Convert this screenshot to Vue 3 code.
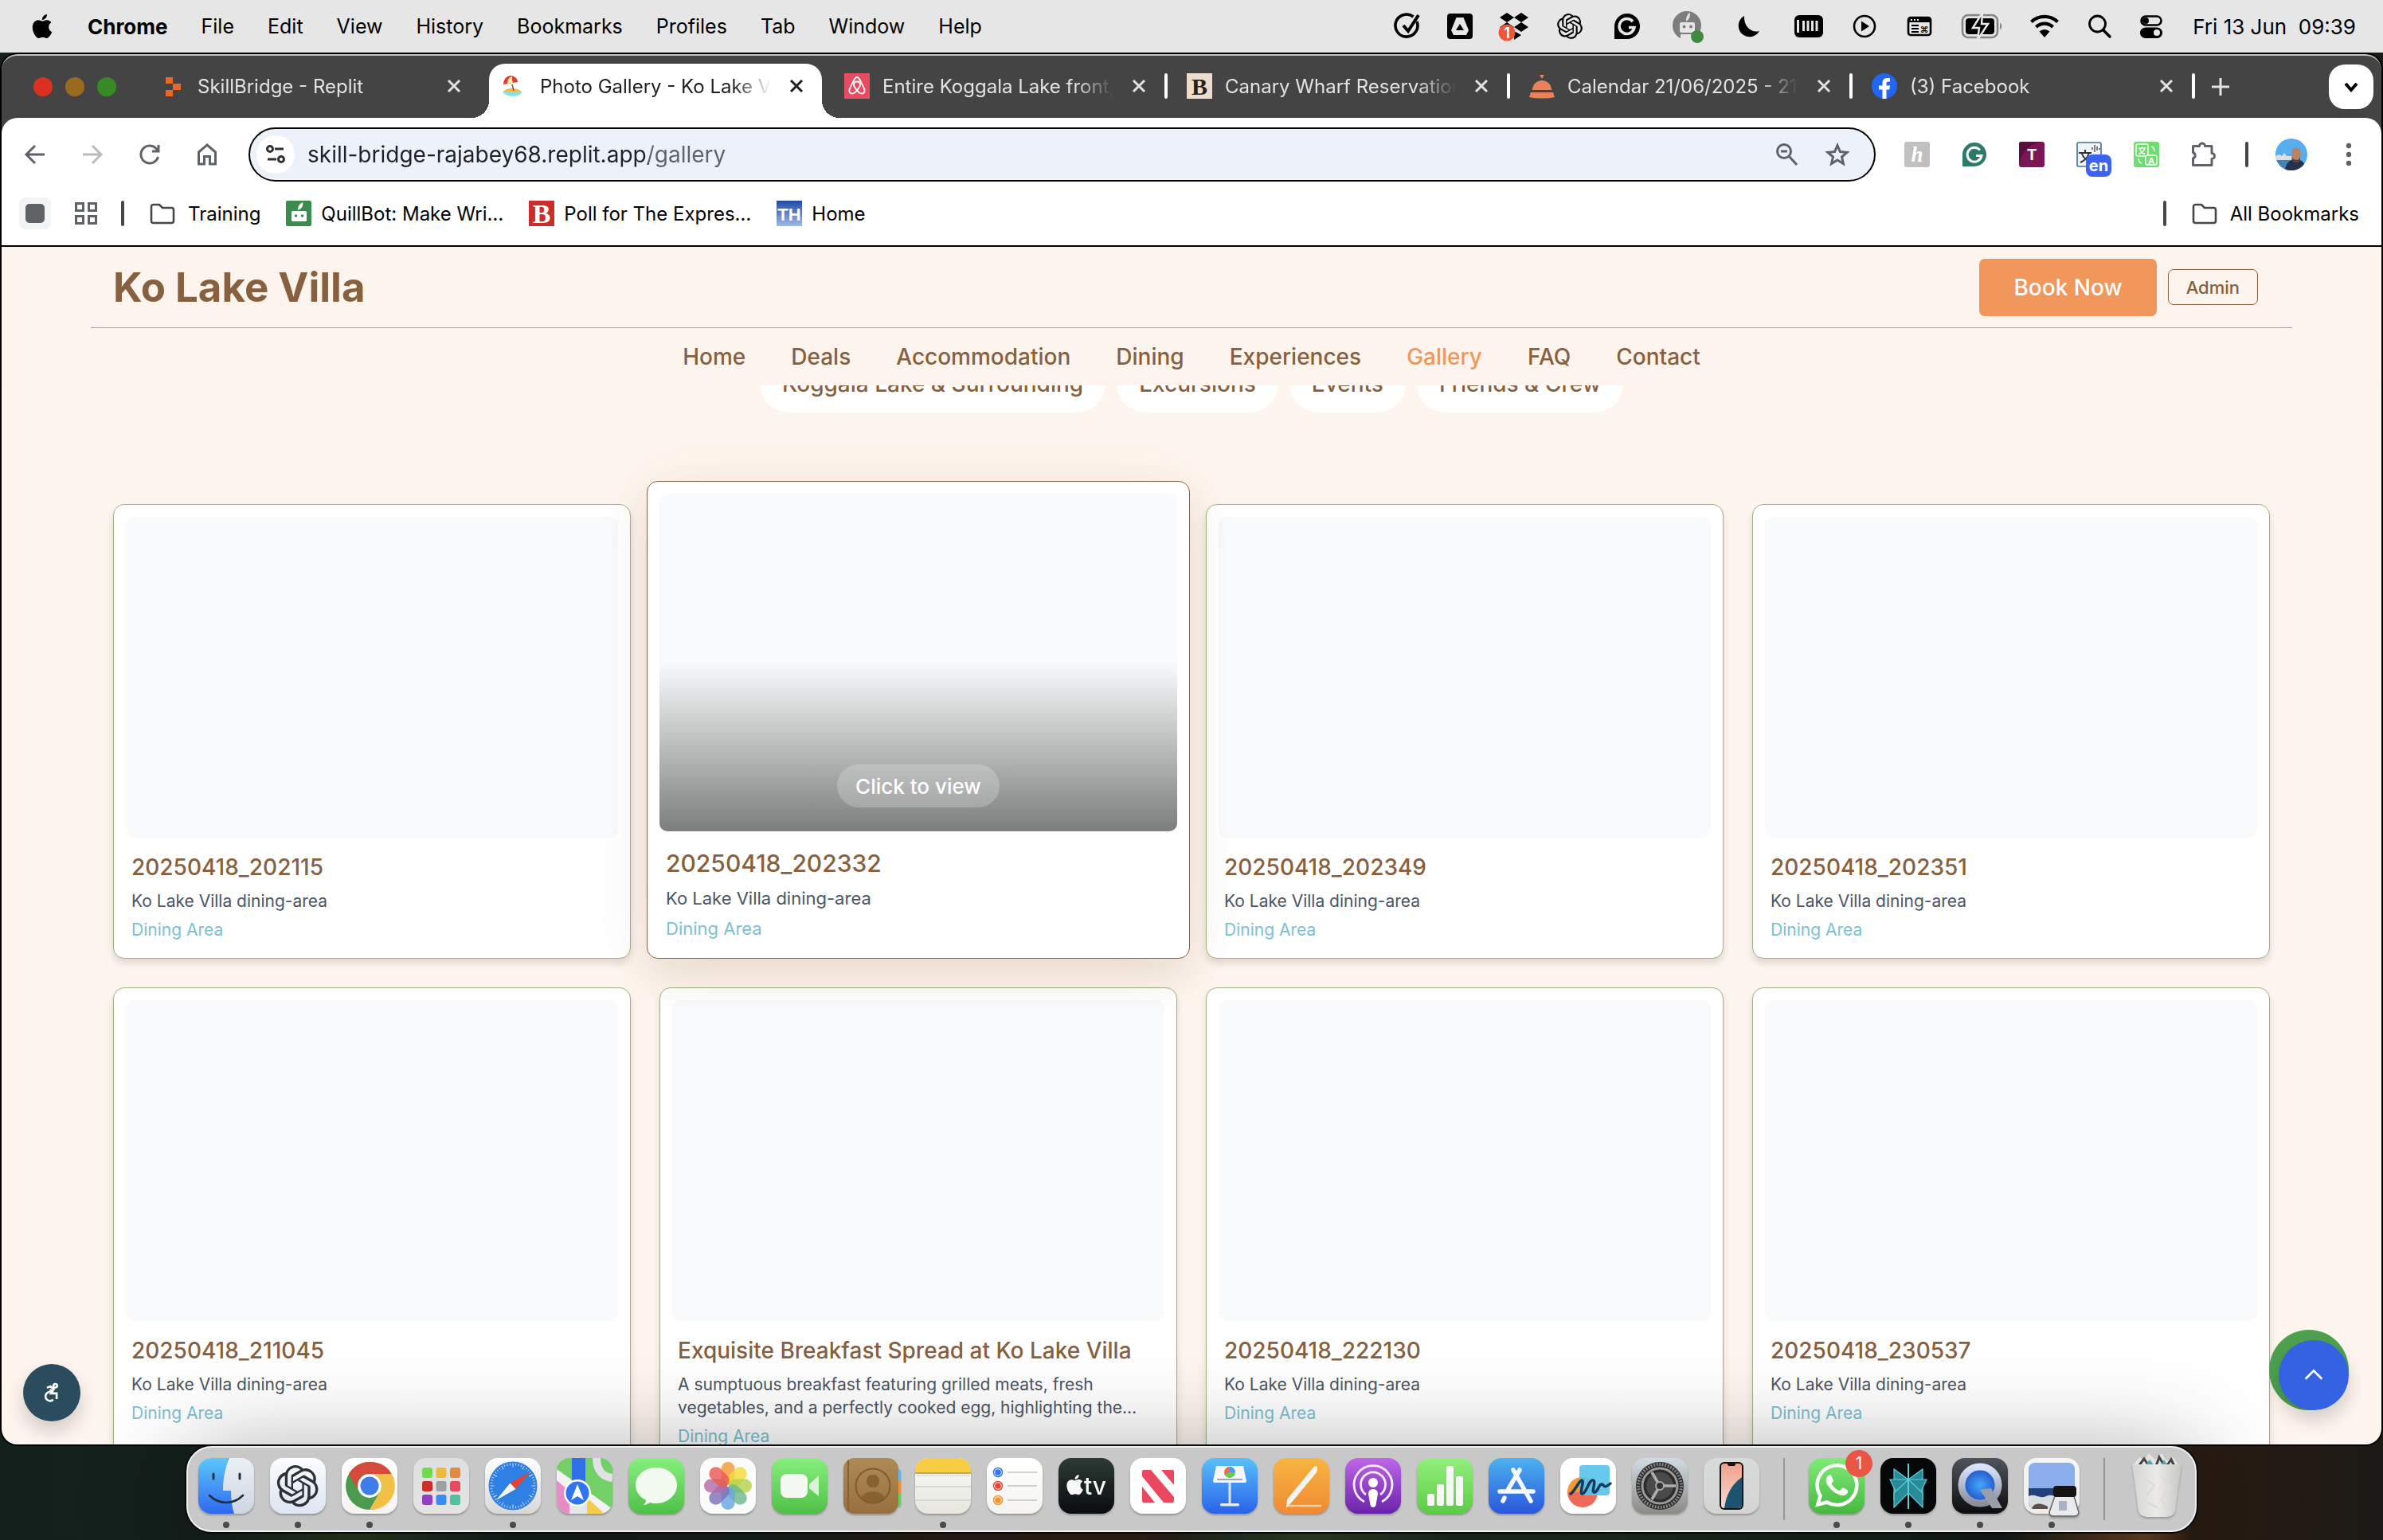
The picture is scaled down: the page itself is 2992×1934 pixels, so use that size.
<script setup>
import { ref } from 'vue'

const apple =
  'M12.152 6.896c-.948 0-2.415-1.078-3.96-1.04-2.04.027-3.91 1.183-4.961 3.014-2.117 3.675-.546 9.103 1.519 12.09 1.013 1.454 2.208 3.09 3.792 3.039 1.52-.065 2.09-.987 3.935-.987 1.831 0 2.35.987 3.96.948 1.637-.026 2.676-1.48 3.676-2.948 1.156-1.688 1.636-3.325 1.662-3.415-.039-.013-3.182-1.221-3.22-4.857-.026-3.04 2.48-4.494 2.597-4.559-1.429-2.09-3.623-2.324-4.39-2.376-2-.156-3.675 1.09-4.61 1.09zM15.53 3.83c.843-1.012 1.4-2.427 1.245-3.83-1.207.052-2.662.805-3.532 1.818-.78.896-1.454 2.338-1.273 3.714 1.338.104 2.715-.688 3.559-1.701'
const openai =
  'M22.2819 9.8211a5.9847 5.9847 0 0 0-.5157-4.9108 6.0462 6.0462 0 0 0-6.5098-2.9A6.0651 6.0651 0 0 0 4.9807 4.1818a5.9847 5.9847 0 0 0-3.9977 2.9 6.0462 6.0462 0 0 0 .7427 7.0966 5.98 5.98 0 0 0 .511 4.9107 6.051 6.051 0 0 0 6.5146 2.9001A5.9847 5.9847 0 0 0 13.2599 24a6.0557 6.0557 0 0 0 5.7718-4.2058 5.9894 5.9894 0 0 0 3.9977-2.9001 6.0557 6.0557 0 0 0-.7475-7.0729zm-9.022 12.6081a4.4755 4.4755 0 0 1-2.8764-1.0408l.1419-.0804 4.7783-2.7582a.7948.7948 0 0 0 .3927-.6813v-6.7369l2.02 1.1686a.071.071 0 0 1 .038.052v5.5826a4.504 4.504 0 0 1-4.4945 4.4944zm-9.6607-4.1254a4.4708 4.4708 0 0 1-.5346-3.0137l.142.0852 4.783 2.7582a.7712.7712 0 0 0 .7806 0l5.8428-3.3685v2.3324a.0804.0804 0 0 1-.0332.0615L9.74 19.9502a4.4992 4.4992 0 0 1-6.1408-1.6464zM2.3408 7.8956a4.485 4.485 0 0 1 2.3655-1.9728V11.6a.7664.7664 0 0 0 .3879.6765l5.8144 3.3543-2.0201 1.1685a.0757.0757 0 0 1-.071 0l-4.8303-2.7865A4.504 4.504 0 0 1 2.3408 7.872zm16.5963 3.8558L13.1038 8.364 15.1192 7.2a.0757.0757 0 0 1 .071 0l4.8303 2.7913a4.4944 4.4944 0 0 1-.6765 8.1042v-5.6772a.79.79 0 0 0-.407-.667zm2.0107-3.0231l-.142-.0852-4.7735-2.7818a.7759.7759 0 0 0-.7854 0L9.409 9.2297V6.8974a.0662.0662 0 0 1 .0284-.0615l4.8303-2.7866a4.4992 4.4992 0 0 1 6.6802 4.66zM8.3065 12.863l-2.02-1.1638a.0804.0804 0 0 1-.038-.0567V6.0742a4.4992 4.4992 0 0 1 7.3757-3.4537l-.142.0805L8.704 5.459a.7948.7948 0 0 0-.3927.6813zm1.0976-2.3654l2.602-1.4998 2.6069 1.4998v2.9994l-2.5974 1.4997-2.6067-1.4997Z'
const whatsapp =
  'M17.472 14.382c-.297-.149-1.758-.867-2.03-.967-.273-.099-.471-.148-.67.15-.197.297-.767.966-.94 1.164-.173.199-.347.223-.644.075-.297-.15-1.255-.463-2.39-1.475-.883-.788-1.48-1.761-1.653-2.059-.173-.297-.018-.458.13-.606.134-.133.298-.347.446-.52.149-.174.198-.298.298-.497.099-.198.05-.371-.025-.52-.075-.149-.669-1.612-.916-2.207-.242-.579-.487-.5-.669-.51-.173-.008-.371-.01-.57-.01-.198 0-.52.074-.792.372-.272.297-1.04 1.016-1.04 2.479 0 1.462 1.065 2.875 1.213 3.074.149.198 2.096 3.2 5.077 4.487.709.306 1.262.489 1.694.625.712.227 1.36.195 1.871.118.571-.085 1.758-.719 2.006-1.413.248-.694.248-1.289.173-1.413-.074-.124-.272-.198-.57-.347m-5.421 7.403h-.004a9.87 9.87 0 01-5.031-1.378l-.361-.214-3.741.982.998-3.648-.235-.374a9.86 9.86 0 01-1.51-5.26c.001-5.45 4.436-9.884 9.888-9.884 2.64 0 5.122 1.03 6.988 2.898a9.825 9.825 0 012.893 6.994c-.003 5.45-4.437 9.884-9.885 9.884m8.413-18.297A11.815 11.815 0 0012.05 0C5.495 0 .16 5.335.157 11.892c0 2.096.547 4.142 1.588 5.945L.057 24l6.305-1.654a11.882 11.882 0 005.683 1.448h.005c6.554 0 11.89-5.335 11.893-11.893a11.821 11.821 0 00-3.48-8.413z'

const menus = ['File', 'Edit', 'View', 'History', 'Bookmarks', 'Profiles', 'Tab', 'Window', 'Help']

// Menu bar extras, each drawn on a 40 x 40 grid; w is the slot width in the bar
const extras = [
  { name: 'Tasks', w: 32, art: '<path d="M30.500 13A14 14 0 1 1 26 7" transform="translate(-.5 1)" fill="none" stroke="#000" stroke-width="3.600"/><path d="M13 19l6 7L32 6" fill="none" stroke="#000" stroke-width="4"/>' },
  { name: 'Drive', w: 32, art: '<rect x="4" y="4" width="32" height="32" rx="4"/><path d="M15.500 9h9L31 25l-3 6H12l-3-6z" fill="#e6e6e6"/><path d="M20 17l5 8H15z"/>' },
  { name: 'Dropbox', w: 40, art: '<path d="M11 3l9 6-9 6-9-6zM29 3l9 6-9 6-9-6zM29 15l9 6-9 6-9-6zM11 15l9 6-9 6-9-6zM20 26l9 5-9 6z"/><circle cx="11" cy="28" r="10.500" fill="#ef5537"/><text x="11" y="35" font-size="19" font-weight="600" text-anchor="middle" fill="#fff">1</text>' },
  { name: 'ChatGPT', w: 36, art: `<path transform="translate(4 4) scale(1.330)" d="${openai}"/>` },
  { name: 'Grammarly', w: 44, art: '<path d="M4 36V20A16 16 0 1 1 20 36z"/><path d="M27 14a9.500 9.500 0 1 0 2 7.500h-7" fill="none" stroke="#e6e6e6" stroke-width="3.600"/>' },
  { name: 'QuillBot', w: 44, art: '<circle cx="19" cy="19" r="18" fill="#7d7d7d"/><rect x="10" y="15" width="19" height="13" rx="2" fill="#e6e6e6"/><path d="M18 14c0-5 1-9 5-11 0 5-1 8-5 11z" fill="#e6e6e6"/><circle cx="15.500" cy="20.500" r="2" fill="#7d7d7d"/><circle cx="24" cy="20.500" r="2" fill="#7d7d7d"/><path d="M11 30h16v7H11z" fill="#e6e6e6"/><rect x="24" y="25" width="16" height="16" rx="8" fill="#3f8a3f"/>' },
  { name: 'Focus', w: 44, art: '<path d="M15 7a14 14 0 1 0 19 19C24 29 14 20 15 7z"/>' },
  { name: 'Battery pack', w: 44, art: '<rect x="2" y="6" width="36" height="28" rx="6"/><path d="M6.500 12v16M13.500 13v13M19 13v13M24.500 13v13M30 13v13" stroke="#e6e6e6" stroke-width="3"/>' },
  { name: 'Now playing', w: 32, art: '<circle cx="20" cy="20" r="13" fill="none" stroke="#000" stroke-width="2.600"/><path d="M16 13.500v13l10-6.500z"/>' },
  { name: 'Keyboard viewer', w: 42, art: '<rect x="6" y="9" width="28" height="22" rx="3" fill="none" stroke="#000" stroke-width="2.600"/><path d="M6 9h28v6H6z"/><path d="M9 12h2M13 12h2M17 12h2" stroke="#e6e6e6" stroke-width="2"/><path d="M10 19h9M10 23h9M10 27h9" stroke="#000" stroke-width="2"/><text x="26" y="28" font-size="11" font-weight="700" text-anchor="middle">⌘</text>' },
  { name: 'Battery', w: 48, art: '<rect x="-3" y="6" width="44" height="28" rx="7" fill="none" stroke="#858585" stroke-width="2.600"/><rect x="1" y="10" width="36" height="20" rx="4"/><path d="M44 16c3 1 3 7 0 8z" fill="#858585"/><path d="M22 3L10 22h8l-2 15L29 17h-8z" stroke="#e6e6e6" stroke-width="2.500"/>' },
  { name: 'Wi-Fi', w: 48, art: '<path d="M3.500 14.500a24 24 0 0 1 33 0" fill="none" stroke="#000" stroke-width="4.200"/><path d="M9.500 21a15 15 0 0 1 21 0" fill="none" stroke="#000" stroke-width="4.200"/><path d="M20 34l-6.500-7.500a9.500 9.500 0 0 1 13 0z"/>' },
  { name: 'Search', w: 26, art: '<circle cx="17.500" cy="17" r="10" fill="none" stroke="#000" stroke-width="2.800"/><path d="M25 25l8 8" stroke="#000" stroke-width="3.400" stroke-linecap="round"/>' },
  { name: 'Control Centre', w: 40, art: '<rect x="7.500" y="7.500" width="25" height="11" rx="5.500" fill="none" stroke="#000" stroke-width="2.600"/><circle cx="13" cy="13" r="4"/><rect x="6" y="21.500" width="28" height="13.500" rx="6.700"/><circle cx="27" cy="28" r="4" fill="#e6e6e6"/>' },
]

// Favicons are drawn on a 32 x 32 grid
const tabs = [
  { title: 'SkillBridge - Replit', line: false, art: '<path d="M8 5h9v8H8zM17 13h10v8H17zM8 21h9v8H8z" fill="#e8682c"/>' },
  { title: 'Photo Gallery - Ko Lake V', active: true, art: '<path d="M1 24a13 8 0 0 1 24 0z" fill="#f5b945"/><path d="M1 23h25a13 8 0 0 1-25 0z" fill="#7ee3ea"/><path d="M13 14l2 8" stroke="#8a5a2b" stroke-width="1.500"/><path d="M2 14C2 6 9 1 15 4c4 2 5 5 5 7z" fill="#e23b2e"/><path d="M7 13c0-5 2-8 6-9 0 3 0 6 1 8z" fill="#ffe9a8"/>' },
  { title: 'Entire Koggala Lake front,', line: true, art: '<rect width="32" height="32" fill="#e64b60"/><path d="M16 21.500c-2.500-3-4-5-4-7a4 4 0 0 1 8 0c0 2-1.500 4-4 7zm0 0c-2 2.500-4 4-6 4-2.500 0-4-2-3.500-4.500C7 18.500 13 7 14 6a2.500 2.500 0 0 1 4 0c1 1 7 12.500 7.500 15 .5 2.500-1 4.500-3.500 4.500-2 0-4-1.500-6-4z" fill="none" stroke="#fff" stroke-width="1.800"/>' },
  { title: 'Canary Wharf Reservation', line: true, art: '<rect width="32" height="32" fill="#eddccb"/><text x="16" y="27" font-size="30" font-weight="700" text-anchor="middle" font-family="Liberation Serif, serif" fill="#222">B</text>' },
  { title: 'Calendar 21/06/2025 - 21', line: true, art: '<path d="M13 2h6l-3 5zM4 21a12 12 0 0 1 24 0zM2 24h28l2 6c-9 2-23 2-32 0z" fill="#e8825c"/>' },
  { title: '(3) Facebook', line: true, art: '<circle cx="16" cy="16" r="16" fill="#2166f5"/><path d="M13.500 32V20.500h-4.500V15.500h4.500v-3c0-4.500 2.500-6.500 6-6.500 1.500 0 2.500.2 3.500.4v4.200h-2.200c-1.800 0-2.300.9-2.300 2.400v2.500H23l-.8 5h-3.700V32z" fill="#fff"/>' },
]

const address = ref('skill-bridge-rajabey68.replit.app/gallery')

const folder = '<path d="M2 7.500A2.500 2.500 0 0 1 4.500 5H12l4 4h11.500A2.500 2.500 0 0 1 30 11.500v14a2.500 2.500 0 0 1-2.500 2.500h-23A2.500 2.500 0 0 1 2 25.500z" fill="none" stroke="#474747" stroke-width="2.600"/>'
const bookmarks = [
  { title: 'Training', folder: true, art: folder },
  { title: 'QuillBot: Make Wri…', art: '<rect width="32" height="32" rx="2" fill="#3c8c50"/><rect x="7" y="13" width="19" height="13" rx="1.500" fill="#fff"/><circle cx="12.500" cy="19" r="1.800" fill="#3c8c50"/><circle cx="20.500" cy="19" r="1.800" fill="#3c8c50"/><path d="M15 12c0-5 2-8 6-10 1 4-1 8-4.500 9z" fill="#fff"/>' },
  { title: 'Poll for The Expres…', art: '<rect width="32" height="32" fill="#cc2d28"/><text x="16" y="28" font-size="34" font-weight="700" text-anchor="middle" font-family="Liberation Serif, serif" fill="#fff">B</text>' },
  { title: 'Home', art: '<defs><linearGradient id="th" x2="0" y2="1"><stop offset="0" stop-color="#1f4aa8"/><stop offset="1" stop-color="#9dbae8"/></linearGradient></defs><rect width="32" height="32" fill="url(#th)"/><text x="16" y="25" font-size="22" text-anchor="middle" font-family="Liberation Sans, sans-serif" font-weight="700" fill="#fff">TH</text>' },
]

const extensions = [
  { name: 'Honey', art: '<rect width="32" height="32" rx="3" fill="#c0c0c0"/><text x="16" y="25" font-size="27" font-style="italic" font-weight="700" text-anchor="middle" font-family="Liberation Serif, serif" fill="#fff">h</text>' },
  { name: 'Grammarly', art: '<path d="M1 31V16A15 15 0 1 1 16 31z" fill="#2c7a68"/><path d="M23 10.500a9 9 0 1 0 2 7h-7" fill="none" stroke="#fff" stroke-width="3"/>' },
  { name: 'Text helper', art: '<rect width="32" height="32" rx="3" fill="#7b1757"/><path d="M0 27C4 12 14 2 30 0H3a3 3 0 0 0-3 3z" fill="#570f3e"/><text x="16" y="23" font-size="19" font-weight="700" text-anchor="middle" fill="#fff">T</text>' },
  { name: 'Translate', badge: 'en', art: '<rect x="1" y="1" width="30" height="30" rx="2" fill="#f1f4f8" stroke="#3f7199" stroke-width="1.600"/><path d="M3 14h16M11 10v4M16 14c-2 6-6 10-11 12M7 15c2 5 5 8 9 10" fill="none" stroke="#333" stroke-width="2"/><path d="M20 7v3M23 4v9M26 6v5M29 8v2" stroke="#555" stroke-width="1.500"/>' },
  { name: 'Translator', art: '<rect width="32" height="32" rx="3" fill="#6fdc6f"/><rect x="3" y="3" width="15" height="15" rx="2" fill="none" stroke="#fff" stroke-width="1.500"/><path d="M6 8h9M10.500 6v2M14 8c-1 4-4 6-7.500 7.500M7.500 9c1 3 3 5 6.500 6.500" fill="none" stroke="#fff" stroke-width="1.500"/><rect x="15" y="17" width="14" height="12" rx="2" fill="#6fdc6f" stroke="#fff" stroke-width="1.500"/><text x="22" y="27.500" font-size="11" font-weight="700" text-anchor="middle" fill="#fff">A</text><path d="M22 6c3 1 4 3 4 6M6 21c0 3 1 5 4 6" fill="none" stroke="#fff" stroke-width="1.500"/>' },
  { name: 'Extensions', art: '<path d="M2.500 5.500h8a3.500 3.500 0 1 1 7 0h8.500v9a3.500 3.500 0 1 1 0 7v8H2.500v-8.500a4 4 0 0 0 0-7.500z" fill="none" stroke="#5f6368" stroke-width="3" stroke-linejoin="round"/>' },
]

const siteNav = ['Home', 'Deals', 'Accommodation', 'Dining', 'Experiences', 'Gallery', 'FAQ', 'Contact']
const filters = ['Koggala Lake & Surrounding', 'Excursions', 'Events', 'Friends & Crew']

const area = 'Ko Lake Villa dining-area'
const photos = [
  { title: '20250418_202115', text: area },
  { title: '20250418_202332', text: area, hovered: true },
  { title: '20250418_202349', text: area },
  { title: '20250418_202351', text: area },
  { title: '20250418_211045', text: area },
  { title: 'Exquisite Breakfast Spread at Ko Lake Villa', text: 'A sumptuous breakfast featuring grilled meats, fresh vegetables, and a perfectly cooked egg, highlighting the…' },
  { title: '20250418_222130', text: area },
  { title: '20250418_230537', text: area },
]

const grad = (id, a, b) =>
  `<defs><linearGradient id="${id}" x2="0" y2="1"><stop offset="0" stop-color="${a}"/><stop offset="1" stop-color="${b}"/></linearGradient></defs><rect width="70" height="70" rx="16" fill="url(#${id})"/>`

const petals = ['#f29a38', '#f2dc3c', '#b5d14a', '#6cb98a', '#6aa5de', '#7d72b8', '#b56aa8', '#ea5a50']
  .map((c, i) => `<rect x="26.500" y="5" width="17" height="29" rx="8.500" fill="${c}" opacity=".82" transform="rotate(${i * 45} 35 35)"/>`)
  .join('')
const launch = ['#6fdc50', '#f2b83c', '#e8883c', '#c9302a', '#9aa0a4', '#e8485c', '#9040c0', '#3c8cf0', '#50c0a0']
  .map((c, i) => `<rect x="${11 + (i % 3) * 17.5}" y="${12 + Math.floor(i / 3) * 17}" width="13" height="13" rx="3" fill="${c}"/>`)
  .join('')
const ticks = Array.from({ length: 48 }, (_, i) => `<path d="M35 6.500v${i % 4 ? 2.5 : 5}" stroke="#dcecff" stroke-width=".9" transform="rotate(${i * 7.5} 35 35)"/>`).join('')

// Dock artwork uses a 70 x 70 grid
const dockGroups = [
  [
    { name: 'Finder', on: true, art: `<defs><linearGradient id="fi" x2="0" y2="1"><stop offset="0" stop-color="#5ac8fa"/><stop offset="1" stop-color="#3068f0"/></linearGradient></defs>${grad('fb', '#eceff5', '#cdd6e2')}<path d="M16 0h23c-5 12-8 25-8 41h10c0 10 1 20 4 29H16A16 16 0 0 1 0 54V16A16 16 0 0 1 16 0z" fill="url(#fi)"/><path d="M19 20v6M52 20v6" stroke="#20303c" stroke-width="3" stroke-linecap="round"/><path d="M14 47c12 12 30 12 42 0" fill="none" stroke="#20303c" stroke-width="2.600" stroke-linecap="round"/>` },
    { name: 'ChatGPT', on: true, art: `${grad('cg', '#fbfcfe', '#dde5f2')}<path transform="translate(8.500 9) scale(2.180)" d="${openai}" fill="#2c3138"/>` },
    { name: 'Chrome', on: true, art: `${grad('ch', '#ffffff', '#f6f4f2')}<circle cx="35" cy="35" r="30" fill="#4b9a50"/><path d="M35 20h27.800A30 30 0 0 1 35 65l13-22.500A15 15 0 0 0 35 20z" fill="#f2c044"/><path d="M35 5a30 30 0 0 1 27.800 15H35a15 15 0 0 0-13 22.500L9 20A30 30 0 0 1 35 5z" fill="#d64a3c"/><circle cx="35" cy="35" r="15" fill="#fff"/><circle cx="35" cy="35" r="11.500" fill="#3f7de8"/>` },
    { name: 'Launchpad', art: `${grad('lp', '#dddfe1', '#e4e4e2')}${launch}` },
    { name: 'Safari', on: true, art: `${grad('sf', '#ffffff', '#d8d8d8')}<circle cx="35" cy="35" r="30.500" fill="#2f80e4"/>${ticks}<path d="M57 17L38.500 39l-7-7.500z" fill="#e8402f"/><path d="M14 53l17.500-21.500 7 7.500z" fill="#f6f6f6"/>` },
    { name: 'Maps', art: `<defs><clipPath id="mp"><rect width="70" height="70" rx="16"/></clipPath></defs><g clip-path="url(#mp)"><path d="M0 0h70v70H0z" fill="#72d066"/><path d="M0 14l70 50v6H0z" fill="#f3f3f5"/><path d="M0 28l16 14v28H0z" fill="#e88cc8"/><path d="M38 70V50l22 20z" fill="#f5cd48"/><path d="M36 0h34v46L36 20z" fill="#72d066"/><path d="M50 0c0 16 8 24 20 25" fill="none" stroke="#e2e2e6" stroke-width="10"/><path d="M19 0h17v70H19z" fill="#2f6fe8"/><path d="M16 50h22v20H16z" fill="#e4e6ea"/></g><circle cx="26" cy="44" r="17" fill="#fff"/><circle cx="26" cy="44" r="14.500" fill="#2f74f0"/><path d="M26 33l8 20-8-5-8 5z" fill="#fff"/>` },
    { name: 'Messages', art: `${grad('ms', '#86ef7c', '#50c048')}<path d="M35 12c15 0 26 10 26 22S50 57 35 57c-3 0-5 0-8-1-2 1-5 3-8 3 2-2 3-4 3-6C14 49 9 42 9 34c0-12 11-22 26-22z" fill="#f2faf0"/>` },
    { name: 'Photos', art: `<rect width="70" height="70" rx="16" fill="#fbfbfb"/>${petals}` },
    { name: 'FaceTime', art: `${grad('ft', '#86ef7c', '#50c048')}<rect x="11" y="20" width="34" height="30" rx="8" fill="#f4faf2"/><path d="M47 33l12-11v26L47 38z" fill="#dcf2d8"/>` },
    { name: 'Contacts', art: '<path d="M62 14h8a3 3 0 0 1 2 3v12H62z" fill="#5fb8e8"/><path d="M62 29h10v16H62z" fill="#f09038"/><path d="M62 45h10v12a3 3 0 0 1-3 3h-7z" fill="#66cc5c"/><defs><linearGradient id="ct" x2="0" y2="1"><stop offset="0" stop-color="#ae8a55"/><stop offset="1" stop-color="#98703f"/></linearGradient></defs><rect width="69" height="70" rx="14" fill="url(#ct)"/><path d="M6 3v64" stroke="#856033" stroke-width="2"/><circle cx="37" cy="35" r="21.500" fill="none" stroke="#7d5a30" stroke-width="2"/><circle cx="37" cy="29" r="8" fill="#86622f"/><path d="M22 50a16 12 0 0 1 30 0 21 21 0 0 1-30 0z" fill="#86622f"/>' },
    { name: 'Notes', on: true, art: `${grad('nt', '#fbfbf8', '#e6e5df')}<path d="M0 18V16A16 16 0 0 1 16 0h38a16 16 0 0 1 16 16v2z" fill="#f7cd46"/><path d="M0 19h70" stroke="#b5a67c" stroke-width="2"/><path d="M2 22h66" stroke="#bbb" stroke-width="1.500" stroke-dasharray="1 1.500"/><path d="M0 36h70M0 53h70" stroke="#cfcfcf" stroke-width="1.500"/>` },
    { name: 'Reminders', art: `${grad('rm', '#ffffff', '#f4f3ef')}<g stroke-width="1.500" fill="none"><circle cx="14" cy="18" r="5.500" stroke="#2f74f0"/><circle cx="14" cy="35" r="5.500" stroke="#e04838"/><circle cx="14" cy="53" r="5.500" stroke="#ee9430"/></g><circle cx="14" cy="18" r="3.800" fill="#2f74f0"/><circle cx="14" cy="35" r="3.800" fill="#e04838"/><circle cx="14" cy="53" r="3.800" fill="#ee9430"/><path d="M26 18h37M26 35h37M26 53h37" stroke="#c2c2c2" stroke-width="1.600"/>` },
    { name: 'TV', art: `${grad('tv', '#2c3a34', '#0a0c10')}<path transform="translate(8 21) scale(1.050)" d="${apple}" fill="#f8f8f8"/><text x="32" y="46" font-size="30" fill="#f8f8f8" font-weight="500">tv</text>` },
    { name: 'News', art: '<rect width="70" height="70" rx="16" fill="#fff"/><path d="M15 17a2 2 0 0 1 2-2h9l29 34v5a2 2 0 0 1-2 2H42L15 23z" fill="#ea4860"/><path d="M39 15h14a2 2 0 0 1 2 2v17z" fill="#ea4860"/><path d="M15 36l16 20H17a2 2 0 0 1-2-2z" fill="#ea4860"/>' },
    { name: 'Keynote', art: `${grad('kn', '#58c0fa', '#2a62ea')}<path d="M18 10h34l4 19a2 2 0 0 1-2 2H16a2 2 0 0 1-2-2z" fill="#f6f6f8"/><circle cx="35" cy="18" r="7" fill="#68c850"/><path d="M35 18v-7a7 7 0 0 0-6 10z" fill="#ee6a50"/><path d="M35 18v-7a7 7 0 0 1 7 7z" fill="#4a9cf0"/><path d="M19 27h32" stroke="#9aa8b8" stroke-width="2"/><path d="M35 31v27" stroke="#dfe6f0" stroke-width="3"/><rect x="23" y="57" width="24" height="3.500" rx="1.500" fill="#e6ecf4"/>` },
    { name: 'Pages', art: `${grad('pg', '#f7b540', '#ef8a34')}<path d="M57 13c2 1 1 4-1 8L21 53l-9 7 3-11 36-33c3-3 5-4 6-3z" transform="rotate(-8 35 35)" fill="#f6f4f2"/><path d="M18 60h42" stroke="#f8cfa0" stroke-width="2.500"/>` },
    { name: 'Podcasts', art: `${grad('pc', '#bf66ea', '#6a22aa')}<g fill="none" stroke="#f4ecfa" stroke-width="2.800"><path d="M24 55a24 24 0 1 1 22 0"/><path d="M26 46a15.500 15.500 0 1 1 18 0"/></g><circle cx="35" cy="31" r="6" fill="#fff"/><path d="M29 45c0-4 3-6 6-6s6 2 6 6l-2.500 14c-1 4-6 4-7 0z" fill="#fff"/>` },
    { name: 'Numbers', art: `${grad('nm', '#92f07c', '#5ccb46')}<g fill="#f4faf2"><rect x="13" y="45" width="9" height="15" rx="2"/><rect x="25" y="33" width="9" height="27" rx="2"/><rect x="37" y="10" width="9" height="50" rx="2"/><rect x="49" y="23" width="9" height="37" rx="2"/></g>` },
    { name: 'App Store', art: `${grad('as', '#4cb2f0', '#2a56da')}<g stroke="#f6f9fe" stroke-width="5.500" stroke-linecap="round"><path d="M31 15l22 39M39 15L23 42M14 42h42M20 50l-2 4"/></g>` },
    { name: 'Freeform', art: '<rect width="70" height="70" rx="16" fill="#fff"/><circle cx="28" cy="43" r="19" fill="#ee6a58"/><path d="M9 43a19 19 0 0 1 19-19v19z" fill="#f29a38"/><rect x="24" y="9" width="38" height="38" rx="4" fill="#5ac4ea" opacity=".92"/><path d="M13 45c6-4 10-16 14-17 4 0-4 18 1 17s8-18 13-17-3 16 2 15 5-10 9-10 1 7 11-1" fill="none" stroke="#123c5c" stroke-width="3.500" stroke-linecap="round"/>' },
    { name: 'System Settings', art: `${grad('ss', '#cfdce4', '#8c8a86')}<circle cx="35" cy="35" r="30" fill="#2c2c2c"/><circle cx="35" cy="35" r="27" fill="none" stroke="#8c8c8c" stroke-width="4" stroke-dasharray="1.800 1.800"/><circle cx="35" cy="35" r="22" fill="none" stroke="#9a9a9a" stroke-width="3"/><circle cx="35" cy="35" r="17" fill="#4a4a4a"/><path d="M35 35h20M35 35L25 18M35 35L25 52" stroke="#b0b0b0" stroke-width="3.500"/><circle cx="35" cy="35" r="5" fill="#333" stroke="#aaa" stroke-width="2"/>` },
    { name: 'iPhone Mirroring', art: `${grad('im', '#d8dbdb', '#d4d4d2')}<defs><linearGradient id="ip" x2="0" y2="1"><stop offset="0" stop-color="#f0a08c"/><stop offset="1" stop-color="#f6dcd4"/></linearGradient></defs><rect x="20" y="5" width="30" height="60" rx="6" fill="#111"/><rect x="22" y="7" width="26" height="56" rx="4" fill="url(#ip)"/><path d="M48 24C34 34 28 48 26 63h18a4 4 0 0 0 4-4z" fill="#1c5470"/><rect x="30" y="6" width="10" height="4" rx="2" fill="#111"/>` },
  ],
  [
    { name: 'WhatsApp', on: true, badge: '1', art: `${grad('wa', '#80ec78', '#46b840')}<path transform="translate(8 7) scale(2.280)" d="${whatsapp}" fill="#fafafa"/>` },
    { name: 'Perplexity', on: true, art: '<rect width="70" height="70" rx="16" fill="#050708"/><g stroke="#58d0dc" stroke-width="1.200" fill="#2a8a98"><path d="M35 27L17 14v38h5l13-20zM35 27l18-13v38h-5L35 32z"/><path d="M12 27h46L48 48l-13-21-13 21z"/><path d="M17 44v18l18-18 18 18V44L35 27z"/><path d="M35 7v57" stroke-width="2"/></g>' },
    { name: 'QuickTime Player', on: true, art: `${grad('qt', '#50545c', '#0c0c0e')}<defs><radialGradient id="qb"><stop offset="0" stop-color="#48a8f8"/><stop offset="1" stop-color="#1c4cc8"/></radialGradient><linearGradient id="qr" x2="0" y2="1"><stop offset="0" stop-color="#d8e4ff"/><stop offset="1" stop-color="#8a8e98"/></linearGradient></defs><circle cx="35" cy="34" r="23" fill="url(#qb)" stroke="url(#qr)" stroke-width="9"/><path d="M35 40l14-2 14 25H50z" fill="#9a9ea8"/>` },
    { name: 'Preview', on: true, art: `${grad('pv', '#f6f6f6', '#ededed')}<rect x="6" y="6" width="58" height="58" rx="8" fill="#8aaeec"/><path d="M6 38h58v18a8 8 0 0 1-8 8H14a8 8 0 0 1-8-8z" fill="#24407c"/><path d="M6 48c8-4 14 4 22 0s14 4 20 0v16H14a8 8 0 0 1-8-8z" fill="#d8dde2"/><path d="M10 64c2-8 12-8 20-3v3z" fill="#5c5048"/><path d="M39 48h24l6 20a5 5 0 0 1-5 5H36a5 5 0 0 1-4-5z" fill="#e8eaec" stroke="#666" stroke-width="1.500"/><rect x="37" y="35" width="29" height="14" rx="4" fill="#151515"/><path d="M44 54h10v12H44z" fill="#a8b4c4"/>` },
  ],
  [
    { name: 'Bin', art: '<defs><linearGradient id="bn"><stop offset="0" stop-color="#d8d8d6"/><stop offset=".5" stop-color="#f0efee"/><stop offset="1" stop-color="#c8c8c6"/></linearGradient></defs><path d="M4 10L13-1l6 4 6-9 8 8 8-8 6 9 9-3 8 10z" fill="#e4e4e4"/><path d="M13 9l6-8 6 9M34 10l4-11 6 10M48 9l5-7 4 8" fill="none" stroke="#444" stroke-width="3"/><path d="M26 2l6 8H20zM44 2l5 8h-9z" fill="#5aa0a8"/><path d="M4 8h62l-8 58c-1 6-6 8-12 8H24c-6 0-11-2-12-8z" fill="url(#bn)" opacity=".94"/><path d="M16 24l16 10-10 14M40 22l12 14-12 16 10 12M22 56l14 6" fill="none" stroke="#dcdcda" stroke-width="2.500"/>' },
  ],
]
</script>

<template>
  <div class="desktop">
    <header class="menubar">
      <nav class="menus" aria-label="Application menu">
        <button class="menu" aria-label="Apple"><svg class="apple" viewBox="0 0 24 24"><path :d="apple" /></svg></button>
        <button class="menu app">Chrome</button>
        <button v-for="m in menus" :key="m" class="menu">{{ m }}</button>
      </nav>
      <div class="extras">
        <button v-for="e in extras" :key="e.name" class="extra" :style="{ width: e.w + 'px' }" :aria-label="e.name">
          <svg viewBox="0 0 40 40" v-html="e.art"></svg>
        </button>
        <time class="clock">Fri 13 Jun&nbsp; 09:39</time>
      </div>
    </header>

    <main class="window">
      <div class="tabstrip">
        <div class="lights">
          <button class="light red" aria-label="Close window"></button>
          <button class="light amber" aria-label="Minimise window"></button>
          <button class="light green" aria-label="Zoom window"></button>
        </div>
        <div v-for="t in tabs" :key="t.title" class="tab" :class="{ active: t.active, lined: t.line }">
          <svg class="favicon" viewBox="0 0 32 32" v-html="t.art"></svg>
          <span class="tab-title">{{ t.title }}</span>
          <button class="tab-close" aria-label="Close tab">
            <svg viewBox="0 0 32 32"><path d="M9 9l14 14M23 9L9 23" /></svg>
          </button>
        </div>
        <button class="new-tab" aria-label="New tab"><svg viewBox="0 0 32 32"><path d="M16 5v22M5 16h22" /></svg></button>
        <button class="tab-search" aria-label="Search tabs"><svg viewBox="0 0 32 32"><path d="M9 12l7 8 7-8" /></svg></button>
      </div>

      <div class="toolbar">
        <div class="history">
          <button aria-label="Back"><svg viewBox="0 0 32 32"><path d="M28 16H6M16 5L5 16l11 11" /></svg></button>
          <button class="dim" aria-label="Forward"><svg viewBox="0 0 32 32"><path d="M4 16h22M16 5l11 11-11 11" /></svg></button>
          <button aria-label="Reload"><svg viewBox="0 0 32 32"><path d="M26.500 19A11 11 0 1 1 24 8.500l3 3M27 4v8h-8" /></svg></button>
          <button aria-label="Home page"><svg viewBox="0 0 32 32"><path d="M5.500 13L16 4l10.500 9v15h-7V18.500h-7V28h-7z" /></svg></button>
        </div>
        <form class="omnibox" @submit.prevent>
          <button class="site-info" type="button" aria-label="Site information">
            <svg viewBox="0 0 32 32"><path d="M15 9h11M6 22h11" /><circle cx="9" cy="9" r="3.500" /><circle cx="23" cy="22" r="3.500" /></svg>
          </button>
          <input v-model="address" class="address" type="text" aria-label="Address" spellcheck="false" />
          <button type="button" aria-label="Zoom"><svg viewBox="0 0 32 32"><circle cx="13" cy="12" r="8.500" /><path d="M19 18l10 11M9 12h8" /></svg></button>
          <button type="button" aria-label="Bookmark this page"><svg viewBox="0 0 32 32"><path d="M16 4.500l3.400 8 8.600.8-6.500 5.700 2 8.500-7.500-4.600-7.500 4.600 2-8.500L4 13.300l8.600-.8z" /></svg></button>
        </form>
        <div class="extensions">
          <button v-for="x in extensions" :key="x.name" class="extension" :aria-label="x.name">
            <svg viewBox="0 0 32 32" v-html="x.art"></svg>
            <span v-if="x.badge" class="lang">{{ x.badge }}</span>
          </button>
        </div>
        <span class="rule"></span>
        <button class="avatar" aria-label="Profile">
          <svg viewBox="0 0 40 40">
            <defs><clipPath id="face"><circle cx="20" cy="20" r="20" /></clipPath></defs>
            <g clip-path="url(#face)">
              <path d="M0 0h40v40H0z" fill="#56aef0" />
              <path d="M0 22l5-2 3 2 3-4 3 4h6v7H0z" fill="#d8e0e4" />
              <path d="M0 27h20v13H0z" fill="#3f84b8" />
              <path d="M12 40c1-9 6-14 13-14s13 4 13 14z" fill="#24304c" />
              <ellipse cx="26" cy="19" rx="6" ry="8" fill="#b88468" />
              <path d="M21 23c2 6 8 6 10 0v5c-3 3-8 3-10 0z" fill="#5c4438" />
            </g>
          </svg>
        </button>
        <button class="more" aria-label="Chrome menu"><svg viewBox="0 0 32 32"><circle cx="16" cy="5" r="3.200" /><circle cx="16" cy="16" r="3.200" /><circle cx="16" cy="27" r="3.200" /></svg></button>
      </div>

      <nav class="bookmarks" aria-label="Bookmarks">
        <button class="group" aria-label="Tab groups"><span class="swatch"></span></button>
        <button class="apps" aria-label="Apps"><svg viewBox="0 0 28 28"><path d="M1.500 1.500h9v9h-9zM17.500 1.500h9v9h-9zM1.500 17.500h9v9h-9zM17.500 17.500h9v9h-9z" /></svg></button>
        <span class="rule"></span>
        <a v-for="b in bookmarks" :key="b.title" class="bookmark" :class="{ folder: b.folder }" href="#">
          <svg viewBox="0 0 32 32" v-html="b.art"></svg>{{ b.title }}
        </a>
        <span class="rule last"></span>
        <a class="bookmark folder" href="#"><svg viewBox="0 0 32 32" v-html="folder"></svg>All Bookmarks</a>
      </nav>

      <div class="page">
        <header class="site-header">
          <div class="brand-row">
            <a class="brand" href="#">Ko Lake Villa</a>
            <button class="book">Book Now</button>
            <button class="admin">Admin</button>
          </div>
          <nav class="site-nav" aria-label="Site">
            <a v-for="n in siteNav" :key="n" href="#" :class="{ current: n === 'Gallery' }">{{ n }}</a>
          </nav>
        </header>

        <div class="filters">
          <button v-for="f in filters" :key="f" class="filter">{{ f }}</button>
        </div>

        <section class="gallery">
          <article v-for="p in photos" :key="p.title" class="card" :class="{ hovered: p.hovered }">
            <div class="photo"><button v-if="p.hovered" class="view">Click to view</button></div>
            <div class="caption">
              <h3>{{ p.title }}</h3>
              <p>{{ p.text }}</p>
              <p class="category">Dining Area</p>
            </div>
          </article>
        </section>

        <button class="access" aria-label="Accessibility options">
          <svg viewBox="0 0 32 32"><circle cx="21" cy="6" r="2.600" /><path d="M9 9l5-2 5 4-4 6h8v8M15 11l-2 5M12 15a6.500 6.500 0 1 0 6 11" /></svg>
        </button>
        <div class="float">
          <button class="chat" aria-label="Chat"></button>
          <button class="to-top" aria-label="Back to top"><svg viewBox="0 0 32 32"><path d="M5 21L16 10l11 11" /></svg></button>
        </div>
      </div>
    </main>

    <footer class="dock">
      <div v-for="(g, i) in dockGroups" :key="i" class="dock-group">
        <button v-for="d in g" :key="d.name" class="dock-item" :class="{ running: d.on }" :aria-label="d.name">
          <svg viewBox="0 0 70 70" v-html="d.art"></svg>
          <span v-if="d.badge" class="count">{{ d.badge }}</span>
        </button>
      </div>
    </footer>
  </div>
</template>

<style>
body {
  background: #10171a;
}
</style>

<style scoped>
* {
  box-sizing: border-box;
}
button {
  padding: 0;
  border: 0;
  background: none;
  font: inherit;
  color: inherit;
}
a {
  color: inherit;
  text-decoration: none;
}
svg {
  display: block;
  flex: none;
  overflow: visible;
}
.desktop {
  display: flex;
  flex-direction: column;
  height: 100vh;
  overflow: hidden;
  font-family: Inter, 'Noto Sans', sans-serif;
  background:
    radial-gradient(circle at 15% 100%, #2c3c22 0, transparent 6%),
    radial-gradient(circle at 55% 100%, #34452a 0, transparent 7%),
    linear-gradient(90deg, transparent 84%, #6e4526 90%, #2a1c12 92%, #1c1a17 100%),
    linear-gradient(90deg, #14201c 0, #14231f 30%, #2e2118 40%, #35241a 48%, #1c2a1e 52%, #22301f 68%, #141d1a 84%, #1b1813 100%);
}

/* Menu bar */
.menubar {
  display: flex;
  justify-content: space-between;
  align-items: center;
  height: 66px;
  padding: 0 34px 0 38px;
  background: #e6e6e6;
  font-size: 25px;
  color: #000;
}
.menus {
  display: flex;
  align-items: center;
  gap: 42px;
}
.app {
  font-size: 26px;
  font-weight: 700;
}
.apple {
  width: 30px;
  height: 30px;
}
.extras {
  display: flex;
  align-items: center;
  gap: 32px;
}
.extra {
  display: flex;
  justify-content: center;
}
.extra svg {
  width: 40px;
  height: 40px;
}
.clock {
  font-size: 26px;
  white-space: nowrap;
}

/* Browser window */
.window {
  display: flex;
  flex: 1;
  flex-direction: column;
  min-height: 0;
  margin: 2px 2px 0;
  border-top: 2px solid #c4c4c4;
  border-radius: 20px;
  overflow: hidden;
  background: #444;
  box-shadow: 0 0 0 2px #000;
}
.tabstrip {
  display: flex;
  flex: none;
  align-items: center;
  height: 78px;
  padding-right: 10px;
  font-size: 24px;
  color: #e3e3e3;
}
.lights {
  display: flex;
  gap: 16px;
  width: 176px;
  padding-left: 40px;
}
.light {
  width: 24px;
  height: 24px;
  border-radius: 50%;
}
.red {
  background: #dc3023;
}
.amber {
  background: #9a6a20;
}
.green {
  background: #388a24;
}
.tab {
  position: relative;
  display: flex;
  flex: 0 1 430px;
  align-items: center;
  min-width: 0;
  height: 78px;
  padding: 0 22px 2px;
}
.tab.lined::after {
  content: '';
  width: 4px;
  height: 32px;
  margin-right: -20px;
  margin-left: 16px;
  border-radius: 2px;
  background: #fff;
}
.favicon {
  z-index: 1;
  width: 32px;
  height: 32px;
}
.tab-title {
  z-index: 1;
  flex: 1;
  margin-left: 16px;
  overflow: hidden;
  white-space: nowrap;
  mask-image: linear-gradient(90deg, #000 calc(100% - 48px), transparent);
}
.tab-close {
  z-index: 1;
  margin-left: 16px;
}
.tab-close svg {
  width: 32px;
  height: 32px;
  fill: none;
  stroke: currentColor;
  stroke-width: 3;
}
.tab.active {
  color: #1f1f1f;
}
.tab.active::before {
  content: '';
  position: absolute;
  inset: 10px 6px 0;
  border-radius: 20px 20px 0 0;
  background: #fff;
}
.tab.active::after {
  content: '';
  position: absolute;
  inset: auto -16px 0;
  height: 22px;
  background:
    radial-gradient(circle at 0 0, transparent 22px, #fff 22px) left / 22px 22px no-repeat,
    radial-gradient(circle at 100% 0, transparent 22px, #fff 22px) right / 22px 22px no-repeat;
}
.new-tab {
  margin-left: 14px;
}
.new-tab svg,
.tab-search svg {
  width: 32px;
  height: 32px;
  fill: none;
  stroke: currentColor;
  stroke-width: 3;
}
.tab-search {
  display: grid;
  place-items: center;
  width: 56px;
  height: 56px;
  margin-left: auto;
  border-radius: 20px;
  background: #fff;
  color: #000;
}
.tab-search svg {
  stroke-width: 4;
}
.toolbar {
  display: flex;
  flex: none;
  align-items: center;
  height: 92px;
  padding: 0 25px 0 26px;
  border-radius: 20px 20px 0 0;
  background: #fff;
  color: #5f6368;
}
.toolbar svg {
  width: 32px;
  height: 32px;
}
.history {
  display: flex;
  gap: 40px;
}
.history svg,
.omnibox svg {
  fill: none;
  stroke: currentColor;
  stroke-width: 3;
}
.history .dim {
  color: #b9bbbe;
}
.omnibox {
  display: flex;
  flex: 1;
  align-items: center;
  gap: 32px;
  height: 68px;
  margin-left: 36px;
  padding: 0 30px 0 8px;
  border: 2px solid #000;
  border-radius: 34px;
  background: #edf2fa;
}
.site-info {
  display: grid;
  place-items: center;
  width: 48px;
  height: 48px;
  border-radius: 50%;
  background: #fff;
  color: #303134;
}
.address {
  flex: 1;
  min-width: 0;
  margin-left: -16px;
  padding: 0;
  border: 0;
  outline: 0;
  background: linear-gradient(90deg, #202124 428px, #5f6368 428px);
  background-clip: text;
  color: transparent;
  font: 28px Inter, 'Noto Sans', sans-serif;
}
.extensions {
  display: flex;
  gap: 40px;
  margin-left: 36px;
}
.extension {
  position: relative;
}
.lang {
  position: absolute;
  top: 16px;
  left: 12px;
  width: 32px;
  height: 28px;
  border-radius: 8px;
  background: #3b63f3;
  color: #fff;
  font-size: 20px;
  font-weight: 700;
  line-height: 28px;
}
.rule {
  width: 4px;
  height: 32px;
  border-radius: 2px;
  background: #474747;
}
.toolbar .rule {
  margin: 0 34px 0 36px;
}
.avatar svg {
  width: 40px;
  height: 40px;
}
.more {
  margin-left: 36px;
}
.more svg {
  fill: #5f6368;
}
.bookmarks {
  display: flex;
  flex: none;
  align-items: center;
  height: 70px;
  padding: 0 28px 12px 22px;
  border-bottom: 2px solid #000;
  background: #fff;
  color: #000;
  font-size: 24px;
}
.group {
  display: grid;
  place-items: center;
  width: 40px;
  height: 40px;
  border-radius: 8px;
  background: #f1f3f4;
}
.swatch {
  width: 24px;
  height: 24px;
  border-radius: 5px;
  background: #5f6368;
}
.apps {
  margin: 0 30px;
}
.apps svg {
  width: 28px;
  height: 28px;
  fill: none;
  stroke: #5f6368;
  stroke-width: 3;
}
.bookmark {
  display: flex;
  align-items: center;
  gap: 12px;
  margin-left: 32px;
  white-space: nowrap;
}
.bookmark.folder {
  gap: 16px;
}
.bookmark svg {
  width: 32px;
  height: 32px;
}
.rule.last {
  margin-left: auto;
}

/* Website */
.page {
  position: relative;
  flex: 1;
  min-height: 0;
  overflow: hidden;
  background: #fef5ee;
  color: #86603f;
}
.site-header {
  position: relative;
  z-index: 3;
  background: #fdf5ed;
  font-size: 28px;
  font-weight: 500;
}
.brand-row {
  display: flex;
  align-items: center;
  height: 102px;
  margin: 0 112px;
  padding: 0 43px 0 28px;
  border-bottom: 1px solid #9db381;
}
.brand {
  margin-right: auto;
  font-size: 51px;
  font-weight: 700;
}
.book {
  height: 72px;
  padding: 0 43px;
  border-radius: 7px;
  background: #f1975b;
  color: #fff;
}
.admin {
  height: 45px;
  margin-left: 14px;
  padding: 0 22px;
  border: 1px solid #86603f;
  border-radius: 7px;
  font-size: 22px;
}
.site-nav {
  display: flex;
  justify-content: center;
  align-items: center;
  gap: 57px;
  height: 72px;
}
.current {
  color: #f1975b;
}
.filters {
  display: flex;
  justify-content: center;
  gap: 14px;
  margin-top: -38px;
}
.filter {
  height: 72px;
  padding: 0 28px;
  border-radius: 36px;
  background: #fff;
  font-size: 28px;
  font-weight: 500;
}
.gallery {
  display: grid;
  grid-template-columns: repeat(4, minmax(0, 1fr));
  gap: 36px;
  padding: 115px 140px 0;
}
.card {
  padding: 15px;
  border: 1px solid #9db381;
  border-radius: 14px;
  background: #fff;
  box-shadow: 0 6px 10px rgba(0, 0, 0, 0.12);
}
.photo {
  height: 403px;
  border-radius: 10px;
  background: #f9fafb;
}
.caption {
  padding: 16px 7px 0;
}
.caption h3 {
  margin: 0 0 6px;
  overflow: hidden;
  font-size: 28px;
  font-weight: 500;
  line-height: 43px;
  white-space: nowrap;
}
.caption p {
  margin: 0 0 7px;
  color: #4b5563;
  font-size: 21px;
  line-height: 29px;
}
.caption .category {
  margin-bottom: 6px;
  color: #7cc0d2;
}
.card.hovered {
  z-index: 2;
  margin: -29px -16px 0;
  border-color: #86603f;
  box-shadow:
    0 24px 50px rgba(134, 96, 63, 0.14),
    0 0 80px rgba(134, 96, 63, 0.06);
}
.hovered .photo {
  display: flex;
  align-items: flex-end;
  justify-content: center;
  height: 424px;
  padding-bottom: 30px;
  background: linear-gradient(#f9fafb 50%, #7c7d7d);
}
.hovered .caption {
  padding: 18px 8px 0;
}
.hovered .caption h3 {
  font-size: 30px;
  line-height: 45px;
}
.hovered .caption p {
  margin-bottom: 8px;
  font-size: 22px;
  line-height: 30px;
}
.hovered .caption .category {
  margin-bottom: 6px;
}
.view {
  height: 54px;
  padding: 0 23px;
  border-radius: 27px;
  background: rgba(255, 255, 255, 0.22);
  color: #fff;
  font-size: 26px;
  font-weight: 500;
}
.access {
  position: absolute;
  z-index: 4;
  bottom: 29px;
  left: 27px;
  display: grid;
  place-items: center;
  width: 72px;
  height: 72px;
  border-radius: 50%;
  background: #2b4c5e;
  box-shadow: 0 12px 24px rgba(0, 0, 0, 0.18);
}
.access svg {
  width: 28px;
  height: 28px;
  fill: none;
  stroke: #fff;
  stroke-width: 3;
}
.float {
  position: absolute;
  z-index: 4;
  right: 41px;
  bottom: 43px;
  width: 100px;
  height: 101px;
}
.chat {
  width: 100%;
  height: 100%;
  border-radius: 50%;
  background: #4ea14f;
}
.to-top {
  position: absolute;
  right: 0;
  bottom: 0;
  display: grid;
  place-items: center;
  width: 88px;
  height: 88px;
  border-radius: 50%;
  background: #3562e3;
  box-shadow: 0 12px 24px rgba(0, 0, 0, 0.18);
}
.to-top svg {
  width: 30px;
  height: 30px;
  fill: none;
  stroke: #fff;
  stroke-width: 3;
}

/* Dock */
.dock {
  position: relative;
  display: flex;
  align-self: center;
  flex: none;
  height: 108px;
  margin: 2px 0 10px;
  padding: 13px;
  border: 2px solid #f0f0f0;
  border-radius: 32px;
  background: #c8c8c8;
  box-shadow:
    0 0 0 2px #0a0a0a,
    0 20px 130px rgba(0, 0, 0, 0.42);
}
.dock-group {
  display: flex;
  gap: 20px;
}
.dock-group + .dock-group {
  margin-left: 30px;
  padding-left: 30px;
  border-left: 2px solid #969696;
}
.dock-item {
  position: relative;
  height: 70px;
}
.dock-item svg {
  width: 70px;
  height: 70px;
  filter: drop-shadow(0 2px 1px rgba(0, 0, 0, 0.25));
}
.running::after {
  content: '';
  position: absolute;
  bottom: -18px;
  left: 31px;
  width: 8px;
  height: 8px;
  border-radius: 50%;
  background: #4a4a4a;
}
.count {
  position: absolute;
  top: -10px;
  right: -10px;
  width: 34px;
  height: 34px;
  border-radius: 50%;
  background: #ea5545;
  color: #fff;
  font-size: 21px;
  line-height: 34px;
}
</style>
